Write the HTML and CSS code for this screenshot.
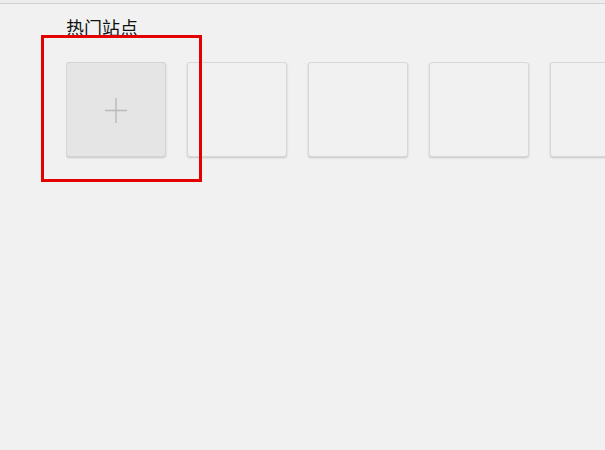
FILE: index.html
```html
<!DOCTYPE html>
<html lang="zh">
<head>
<meta charset="utf-8">
<title>热门站点</title>
<link rel="stylesheet" href="styles.css">
</head>
<body>
<div class="topbar"></div>
<section class="sites">
  <h2 class="title">热门站点</h2>
  <div class="tiles">
    <div class="tile tile-add">
      <svg class="plus" width="24" height="26" viewBox="0 0 24 26"><path d="M12 1V26M1 13.5H23" stroke="#b9b9b9" stroke-width="1.4" fill="none"/></svg>
    </div>
    <div class="tile"></div>
    <div class="tile"></div>
    <div class="tile"></div>
    <div class="tile"></div>
  </div>
  <div class="highlight"></div>
</section>
</body>
</html>
```
FILE: styles.css
```css
html, body {
  margin: 0;
  padding: 0;
  background: #f1f1f1;
  font-family: "Noto Sans CJK SC", "Liberation Sans", sans-serif;
}
.topbar {
  height: 3px;
  border-bottom: 1px solid #d2d2d2;
  background: #ececec;
}
.sites {
  position: relative;
  padding: 12px 0 40px 66px;
}
.title {
  margin: 0;
  font-size: 18px;
  font-weight: normal;
  line-height: 22px;
  color: #111;
}
.tiles {
  display: flex;
  gap: 21px;
  margin-top: 24px;
  padding-bottom: 4px;
  overflow: hidden;
}
.tile {
  flex: 0 0 auto;
  width: 98px;
  height: 93px;
  border: 1px solid #d8d8d8;
  border-radius: 3px;
  background: #f1f1f1;
  box-shadow: 0 1px 2px rgba(0, 0, 0, 0.18);
  display: flex;
  align-items: center;
  justify-content: center;
}
.tile-add {
  background: #e5e5e5;
  border-color: #d4d4d4;
}
.plus {
  display: block;
}
.highlight {
  position: absolute;
  left: 41px;
  top: 31px;
  width: 155px;
  height: 141px;
  border: 3px solid #e30000;
}
```
